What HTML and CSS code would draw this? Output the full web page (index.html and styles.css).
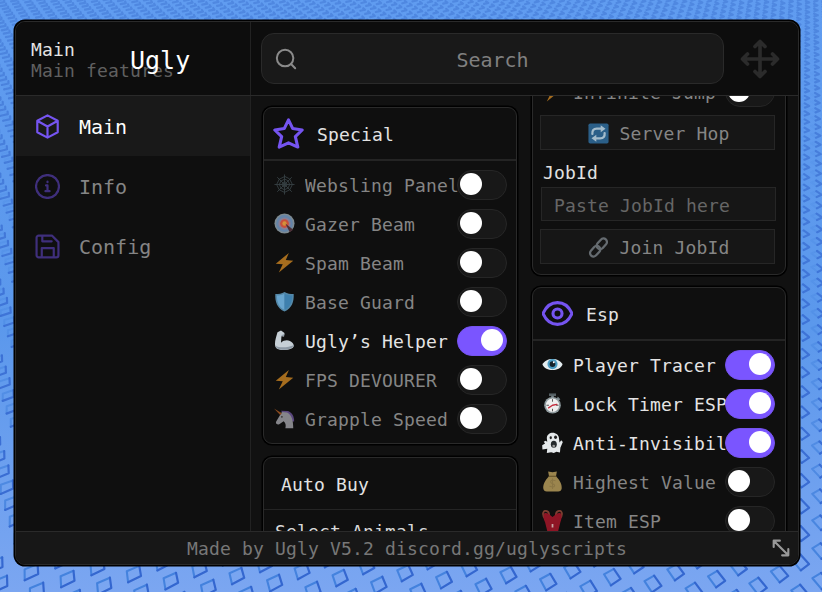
FILE: index.html
```html
<!DOCTYPE html>
<html lang="en">
<head>
    <meta charset="UTF-8">
    <meta name="viewport" content="width=device-width, initial-scale=1.0">
    <title>Ugly V5.2</title>
    <link rel="stylesheet" href="styles.css">
</head>
<body>
    <svg class="ground" viewBox="0 0 822 592">
        <defs>
            <linearGradient id="fadeLight" gradientUnits="userSpaceOnUse" x1="0" y1="0" x2="0" y2="592">
                <stop offset="0" stop-color="#3f7fdc" stop-opacity="0"/>
                <stop offset=".5" stop-color="#3f7fdc" stop-opacity=".25"/>
                <stop offset="1" stop-color="#3f7fdc" stop-opacity=".95"/>
            </linearGradient>
            <linearGradient id="fadeDark" gradientUnits="userSpaceOnUse" x1="0" y1="0" x2="0" y2="592">
                <stop offset="0" stop-color="#3468c8" stop-opacity=".38"/>
                <stop offset=".5" stop-color="#3366cf" stop-opacity=".7"/>
                <stop offset="1" stop-color="#3366cf"/>
            </linearGradient>
        </defs>
        <path id="studsLight" class="studs-light"/>
        <path id="studsDark" class="studs-dark"/>
    </svg>

    <div class="window">
        <div class="top">
            <div class="brand">
                <p class="tab-name">Main</p>
                <p class="tab-desc">Main features</p>
                <span class="title">Ugly</span>
            </div>
            <div class="search">
                <svg class="search-icon" viewBox="0 0 24 24"><circle cx="11" cy="11" r="9"/><path d="M17.500 17.500L22 22"/></svg>
                <span>Search</span>
            </div>
            <svg class="move-icon" viewBox="0 0 24 24"><path d="M12 1.500v21M1.500 12h21M9 4.500l3-3 3 3M9 19.500l3 3 3-3M4.500 9l-3 3 3 3M19.500 9l3 3-3 3"/></svg>
        </div>

        <div class="middle">
            <div class="sidebar">
                <div class="tab active">
                    <svg viewBox="0 0 24 24"><path d="M12 1.300l9.800 5.200v11L12 22.700l-9.800-5.200v-11zM2.500 6.700L12 12l9.500-5.300M12 12v10.500"/></svg>
                    <span>Main</span>
                </div>
                <div class="tab">
                    <svg viewBox="0 0 24 24"><circle cx="12" cy="12" r="11"/><path d="M10.600 11H12v5.500M10 16.500h4M12 7.200v.6"/></svg>
                    <span>Info</span>
                </div>
                <div class="tab">
                    <svg viewBox="0 0 24 24"><path d="M3.500 1.500h12.700l6.300 6.300v12.700a2 2 0 0 1-2 2h-17a2 2 0 0 1-2-2v-17a2 2 0 0 1 2-2zM6.500 22.500v-9h11.500v9M7 1.500v5.500h9"/></svg>
                    <span>Config</span>
                </div>
            </div>

            <div class="content">
                <div class="column">
                    <div class="card">
                        <div class="card-head">
                            <svg viewBox="0 0 24 24"><path d="M12 1.500l3.300 6.700 7.300 1.100-5.300 5.200 1.900 8L12 19.200l-7.200 3.300 1.900-8L1.400 9.300l7.300-1.100z"/></svg>
                            <h3>Special</h3>
                        </div>
                        <div class="rows">
                            <div class="row">
                                <svg class="emoji" viewBox="0 0 24 24"><g fill="none" stroke="#384246" stroke-width="1"><path d="M12 1v22M1 12h22M4 4l16 16M20 4L4 20"/><path d="M12 3l-6 3-3 6 3 6 6 3 6-3 3-6-3-6zM12 6l-4 2-2 4 2 4 4 2 4-2 2-4-2-4zM12 9l-2 1-1 2 1 2 2 1 2-1 1-2-1-2z"/></g></svg>
                                <span class="label">Websling Panel</span><i class="toggle"></i>
                            </div>
                            <div class="row">
                                <svg class="emoji" viewBox="0 0 24 24"><circle cx="12" cy="12" r="11.500" fill="#7e8a91"/><circle cx="12" cy="12" r="9.600" fill="#6484a8"/><circle cx="12" cy="12" r="7" fill="#8a7d94"/><circle cx="12" cy="12" r="5" fill="#c94f3b"/><circle cx="12" cy="12" r="2.500" fill="#d4913a"/><path d="M13 12l9 7-4 3z" fill="#4b2f36"/></svg>
                                <span class="label">Gazer Beam</span><i class="toggle"></i>
                            </div>
                            <div class="row">
                                <svg class="emoji" viewBox="0 0 24 24"><path d="M17 1L2 13.500l8 .6L5.500 23.500 22 10l-8.500-.8z" fill="#a66d1e"/></svg>
                                <span class="label">Spam Beam</span><i class="toggle"></i>
                            </div>
                            <div class="row">
                                <svg class="emoji" viewBox="0 0 24 24"><path d="M12 1C9 3 5 3.500 1.500 3.500 1 12 3.500 20 12 23.500 20.500 20 23 12 22.500 3.500 19 3.500 15 3 12 1z" fill="#5488a8"/><path d="M12 3C10 4.500 6 5 3.300 5c0 7 2 13.500 8.700 16.500z" fill="#68a5cf"/><path d="M12 3c2 1.500 6 2 8.700 2 0 7-2 13.500-8.700 16.500z" fill="#3e80ae"/></svg>
                                <span class="label">Base Guard</span><i class="toggle"></i>
                            </div>
                            <div class="row on">
                                <svg class="emoji" viewBox="0 0 24 24"><path d="M4 2.500l4-2 4 3-.5 4-3-.5-.5 7.500c4-4 10-3.500 13 0 2.500 3 2 5-1 6.500-6 2.500-14 2.500-17.500-.5C-.5 17 2 9 4 2.500z" fill="#c6cfd6"/><path d="M1.500 18c5 2.500 14 2.500 21.500-1-.5 3-6 5.500-12 5.500-5 0-9-1.500-9.500-4.500zM8 6l3 1.500 1-3z" fill="#8d99a5"/></svg>
                                <span class="label">Ugly’s Helper</span><i class="toggle"></i>
                            </div>
                            <div class="row">
                                <svg class="emoji" viewBox="0 0 24 24"><path d="M17 1L2 13.500l8 .6L5.500 23.500 22 10l-8.500-.8z" fill="#a66d1e"/></svg>
                                <span class="label">FPS DEVOURER</span><i class="toggle"></i>
                            </div>
                            <div class="row">
                                <svg class="emoji" viewBox="0 0 24 24"><path d="M8 3l8 .5c5 2 7 6 7 12h-5z" fill="#5a477e"/><path d="M9 4.500l6 .5c5 3 7 8 7 18h-9c1-4 0-6-2-8l-5 3.500c-3 1-4.500-1-3.500-3z" fill="#85858a"/><path d="M0 .5l9 5.500-2 2z" fill="#8b4a1e"/><circle cx="9" cy="10" r="1" fill="#333"/></svg>
                                <span class="label">Grapple Speed</span><i class="toggle"></i>
                            </div>
                        </div>
                    </div>

                    <div class="card">
                        <div class="card-head plain"><h3>Auto Buy</h3></div>
                        <div class="rows"><p class="select-label">Select Animals</p></div>
                    </div>
                </div>

                <div class="column scrolled">
                    <div class="card tools">
                        <div class="row">
                            <svg class="emoji" viewBox="0 0 24 24"><path d="M17 1L2 13.500l8 .6L5.500 23.500 22 10l-8.500-.8z" fill="#a66d1e"/></svg>
                            <span class="label">Infinite Jump</span><i class="toggle"></i>
                        </div>
                        <div class="button">
                            <svg class="emoji" viewBox="0 0 24 24"><rect x=".5" y=".5" width="23" height="23" rx="2" fill="#2b5f88"/><path d="M5 12.500Q4.500 6.500 10 6.500h5.500M19 11.500Q19.500 17.500 14 17.500H8.500" fill="none" stroke="#a4bccb" stroke-width="2.600"/><path d="M14.500 2.500L20 6.500 14.500 10.500zM9.500 13.500l-5.500 4 5.500 4z" fill="#a4bccb"/></svg>
                            <span>Server Hop</span>
                        </div>
                        <p class="field-label">JobId</p>
                        <div class="field">Paste JobId here</div>
                        <div class="button">
                            <svg class="emoji" viewBox="0 0 24 24"><g fill="none" stroke="#656b70" stroke-width="2.600"><rect x="-6.800" y="-4" width="13.600" height="8" rx="4" transform="translate(15.800 7.800) rotate(-48)"/><rect x="-6.800" y="-4" width="13.600" height="8" rx="4" transform="translate(8.200 16.200) rotate(-48)"/></g></svg>
                            <span>Join JobId</span>
                        </div>
                    </div>

                    <div class="card">
                        <div class="card-head">
                            <svg viewBox="0 0 24 24"><path d="M.8 12C3.200 6.500 7 3.600 12 3.600S20.800 6.500 23.200 12C20.800 17.500 17 20.400 12 20.400S3.200 17.500.8 12z"/><circle cx="12" cy="12" r="3.500"/></svg>
                            <h3>Esp</h3>
                        </div>
                        <div class="rows">
                            <div class="row on">
                                <svg class="emoji" viewBox="0 0 24 24"><path d="M.5 12C4 3.500 20 3.500 23.500 12 20 20.500 4 20.500.5 12z" fill="#e4edf0"/><circle cx="12" cy="11.500" r="5.800" fill="#4b9cc4"/><circle cx="12" cy="11.500" r="3.300" fill="#15222b"/><circle cx="13.500" cy="9.500" r="1.100" fill="#fff"/></svg>
                                <span class="label">Player Tracer</span><i class="toggle"></i>
                            </div>
                            <div class="row on">
                                <svg class="emoji" viewBox="0 0 24 24"><path d="M8 .5h8v3H8z" fill="#566064"/><path d="M10.500 3h3v3h-3zM18 4l3 3-2 1.500-2-2z" fill="#78858a"/><circle cx="12" cy="14" r="9.500" fill="#8e9a9e"/><circle cx="12" cy="14" r="7.600" fill="#eee"/><path d="M12 7.500v2M12 18.500v2M5.500 14h2M16.500 14h2" stroke="#444" stroke-width="1"/><path d="M7.500 17l4.500-3 5-1" fill="none" stroke="#c52b3c" stroke-width="1.500"/></svg>
                                <span class="label">Lock Timer ESP</span><i class="toggle"></i>
                            </div>
                            <div class="row on">
                                <svg class="emoji" viewBox="0 0 24 24"><path d="M5.500 7c0-8.500 14-8.500 14 1l.5 4 2-2.500 1.800 2-2.800 6.500-.5 5.500-4-1-3 1.500-3-1-5 1 .5-5L.5 20l-.3-5 3.300-2L2 11l2-1 2 1z" fill="#e5e9eb"/><ellipse cx="10" cy="6.500" rx="1.300" ry="1.700" fill="#222"/><ellipse cx="15.500" cy="6" rx="1.700" ry="2" fill="#222"/><ellipse cx="13.500" cy="14" rx="3.400" ry="4" fill="#22282b"/><path d="M11.500 16q2-3 3.700 0l-1.500 2z" fill="#999"/></svg>
                                <span class="label">Anti-Invisibility</span><i class="toggle"></i>
                            </div>
                            <div class="row">
                                <svg class="emoji" viewBox="0 0 24 24"><path d="M7 .5l5 1 5-1-1 5.500c5 5 7 10 6.500 14q-.5 3.500-4 3.500h-13q-3.500 0-4-3.500C1 16 3 11 8 6z" fill="#9b854e"/><path d="M8 6h8" stroke="#5e4c26" stroke-width="1.300"/><path d="M15 11c-5-2-7 2-3 3.500s3 5-3 3M12 9v11" fill="none" stroke="#8a7645" stroke-width="1.200"/></svg>
                                <span class="label">Highest Value</span><i class="toggle"></i>
                            </div>
                            <div class="row">
                                <svg class="emoji" viewBox="0 0 24 24"><path d="M3.500 10C-1 4 2 .5 4.500 1S8.500 4 8 7M20.500 10c4.500-6 1.500-9.500-1-9S15.500 4 16 7" fill="none" stroke="#7c3f31" stroke-width="2"/><path d="M3 3l4 1 5 4 5-4 4-1c2 3 1.500 7 0 11l-2.500 10H6L3.500 14C1.500 10 1 6 3 3z" fill="#8e1525"/><path d="M11 16h2v4h-2z" fill="#c7a7a5"/></svg>
                                <span class="label">Item ESP</span><i class="toggle"></i>
                            </div>
                        </div>
                    </div>
                </div>
            </div>
        </div>

        <div class="footer">
            <span>Made by Ugly V5.2 discord.gg/uglyscripts</span>
            <svg class="resize-icon" viewBox="0 0 16 16"><path d="M1.500 1.500l13 13M1.500 7V1.500H7M14.500 9v5.500H9"/></svg>
        </div>
    </div>

    <script>
        // square studs laid on a floor that runs away towards the top
        const horizon = -370, depth = 950;

        function project(x, z) {
            const s = 1 / (1 + z / depth);
            return [411 + x * s, horizon + depth * s];
        }

        let light = '', dark = '';
        for (let i = -80; i < 130; i++) {
            for (let j = -110; j < 80; j++) {
                const x = 33 + i * 26 + j * 39;
                const z = i * 12 - j * 7;
                if (z < -40 || z > 1600) continue;
                const [px, py] = project(x, z);
                if (px < -20 || px > 842) continue;
                if (px > 30 && px < 785 && py > 36 && py < 552) continue;
                const c = [[-8.5, 3], [3.5, 9], [8.5, -2], [-3.5, -9]].map(([dx, dz]) =>
                    project(x + dx * 0.92, z + dz * 0.92).map(n => n.toFixed(1)).join(' '));
                light += `M${c[1]}L${c[0]}L${c[3]}`;
                dark += `M${c[1]}L${c[2]}L${c[3]}`;
            }
        }
        document.getElementById('studsLight').setAttribute('d', light);
        document.getElementById('studsDark').setAttribute('d', dark);
    </script>
</body>
</html>
```

FILE: styles.css
```css
* {
    box-sizing: border-box;
}
body {
    margin: 0;
    height: 592px;
    overflow: hidden;
    position: relative;
    padding: 21px 0 0 15px;
    font-family: "DejaVu Sans Mono", monospace;
    font-size: 18px;
    letter-spacing: 0.16px;
    color: #858585;
    background: linear-gradient(180deg, #609cf0 0%, #5b98ec 55%, #7ba6f1 100%);
}
p, h3 {
    margin: 0;
    font-size: 18px;
    font-weight: normal;
}
svg {
    display: block;
    flex: none;
    fill: none;
    stroke-linecap: round;
    stroke-linejoin: round;
}
.ground {
    position: absolute;
    left: 0;
    top: 0;
    width: 822px;
    height: 592px;
}
.studs-light {
    stroke: url(#fadeLight);
    stroke-width: 2.1;
}
.studs-dark {
    stroke: url(#fadeDark);
    stroke-width: 2.2;
}
.window {
    position: relative;
    width: 784px;
    height: 544px;
    display: flex;
    flex-direction: column;
    background: #0f0f0f;
    border: 1px solid #2a2a2a;
    border-radius: 10px;
    box-shadow: 0 0 0 1.5px #000;
    overflow: hidden;
}

/* header */
.top {
    height: 74px;
    flex: none;
    display: flex;
    align-items: center;
    border-bottom: 1px solid #2a2a2a;
    background: #0d0d0d;
}
.brand {
    position: relative;
    width: 235px;
    height: 73px;
    padding: 17px 0 0 15px;
    border-right: 1px solid #222;
}
.tab-name, .tab-desc {
    line-height: 21px;
}
.tab-name {
    color: #e4e4e4;
}
.tab-desc {
    color: #606060;
}
.title {
    position: absolute;
    left: 114px;
    top: 23px;
    font-size: 25px;
    line-height: 32px;
    letter-spacing: 0;
    color: #fff;
}
.search {
    width: 463px;
    height: 51px;
    margin-left: 10px;
    display: flex;
    align-items: center;
    background: #191919;
    border: 1px solid #2a2a2a;
    border-radius: 13px;
    font-size: 20px;
    letter-spacing: 0;
    color: #808080;
}
.search span {
    flex: 1;
    text-align: center;
    padding-top: 2px;
}
.search-icon {
    width: 22px;
    height: 22px;
    margin-left: 13px;
    margin-right: -35px;
    stroke: #8a8a8a;
    stroke-width: 2.2;
}
.move-icon {
    width: 40px;
    height: 40px;
    margin-left: 16px;
    stroke: #2b2b2b;
    stroke-width: 2.2;
}

.middle {
    flex: 1;
    min-height: 0;
    display: flex;
}

/* tabs */
.sidebar {
    width: 235px;
    border-right: 1px solid #222;
}
.tab {
    height: 60px;
    display: flex;
    align-items: center;
    gap: 19px;
    padding-left: 19px;
    font-size: 20px;
    letter-spacing: 0;
    color: #858585;
}
.tab svg {
    width: 25px;
    height: 25px;
    stroke: #3f2f7c;
    stroke-width: 2.1;
}
.tab.active {
    background: #191919;
    color: #fff;
}
.tab.active svg {
    stroke: #7554f0;
}
.tab span {
    padding-top: 1px;
}

/* cards */
.content {
    flex: 1;
    display: flex;
    align-items: flex-start;
    gap: 15px;
    padding: 11px 11px 0 12px;
    height: 435px;
    overflow: hidden;
    background: #111;
}
.column {
    width: 254px;
    flex: none;
    display: flex;
    flex-direction: column;
    gap: 13px;
}
.column.scrolled {
    gap: 12px;
    margin-top: -41px;
}
.card {
    background: #0f0f0f;
    border: 1px solid #2a2a2a;
    border-radius: 9px;
    box-shadow: 0 0 0 1.5px #000;
}
.card-head {
    height: 53px;
    display: flex;
    align-items: center;
    gap: 13px;
    padding-left: 9px;
    border-bottom: 2px solid #242424;
    color: #e2e2e2;
}
.card-head svg {
    width: 31px;
    height: 31px;
    stroke: #7554f0;
    stroke-width: 2.4;
}
.card-head.plain {
    height: 52px;
    padding-left: 17px;
    border-bottom-width: 1px;
}
.card-head h3 {
    padding-top: 2px;
}
.card-head.plain h3 {
    padding-top: 1px;
}
.rows {
    padding: 4px 0 5px;
}
.row {
    height: 39px;
    display: flex;
    align-items: center;
    padding: 0 9px 0 10px;
}
.scrolled .row {
    padding: 0 10px 0 9px;
}
.row.on {
    color: #e4e4e4;
}
.emoji {
    width: 21px;
    height: 21px;
}
.label {
    flex: 1;
    min-width: 0;
    margin: 0 -2px 0 10px;
    padding-top: 2px;
    white-space: nowrap;
    overflow: hidden;
}
.toggle {
    position: relative;
    flex: none;
    width: 50px;
    height: 30px;
    border-radius: 15px;
    background: #181818;
    border: 1px solid #262626;
}
.toggle::before {
    content: "";
    position: absolute;
    left: 2px;
    top: 2.5px;
    width: 22px;
    height: 22px;
    border-radius: 50%;
    background: #fff;
}
.on .toggle {
    background: #7a55ff;
    border-color: #7553ee;
}
.on .toggle::before {
    left: 23px;
}
.select-label {
    padding: 6px 0 0 11px;
    line-height: 24px;
    color: #d8d8d8;
}
.tools {
    padding: 5px 0 10px;
}
.button, .field {
    width: 235px;
    height: 35px;
    margin-left: 7px;
    display: flex;
    align-items: center;
    background: #161616;
    border: 1px solid #262626;
}
.button {
    justify-content: center;
    gap: 11px;
    padding: 1px 0 0 2px;
    margin-top: 4px;
}
.field-label {
    height: 37px;
    padding: 10px 0 0 10px;
    line-height: 25px;
    color: #e0e0e0;
}
.field {
    height: 34px;
    margin-left: 8px;
    padding: 2px 0 0 12px;
    color: #666;
}
.field + .button {
    margin-top: 8px;
}

.footer {
    height: 33px;
    flex: none;
    display: flex;
    align-items: center;
    justify-content: flex-end;
    gap: 145px;
    padding-right: 8px;
    border-top: 1px solid #2a2a2a;
    background: #171717;
    color: #777;
}
.resize-icon {
    width: 18px;
    height: 18px;
    stroke: #999;
    stroke-width: 1.900;
}
```
